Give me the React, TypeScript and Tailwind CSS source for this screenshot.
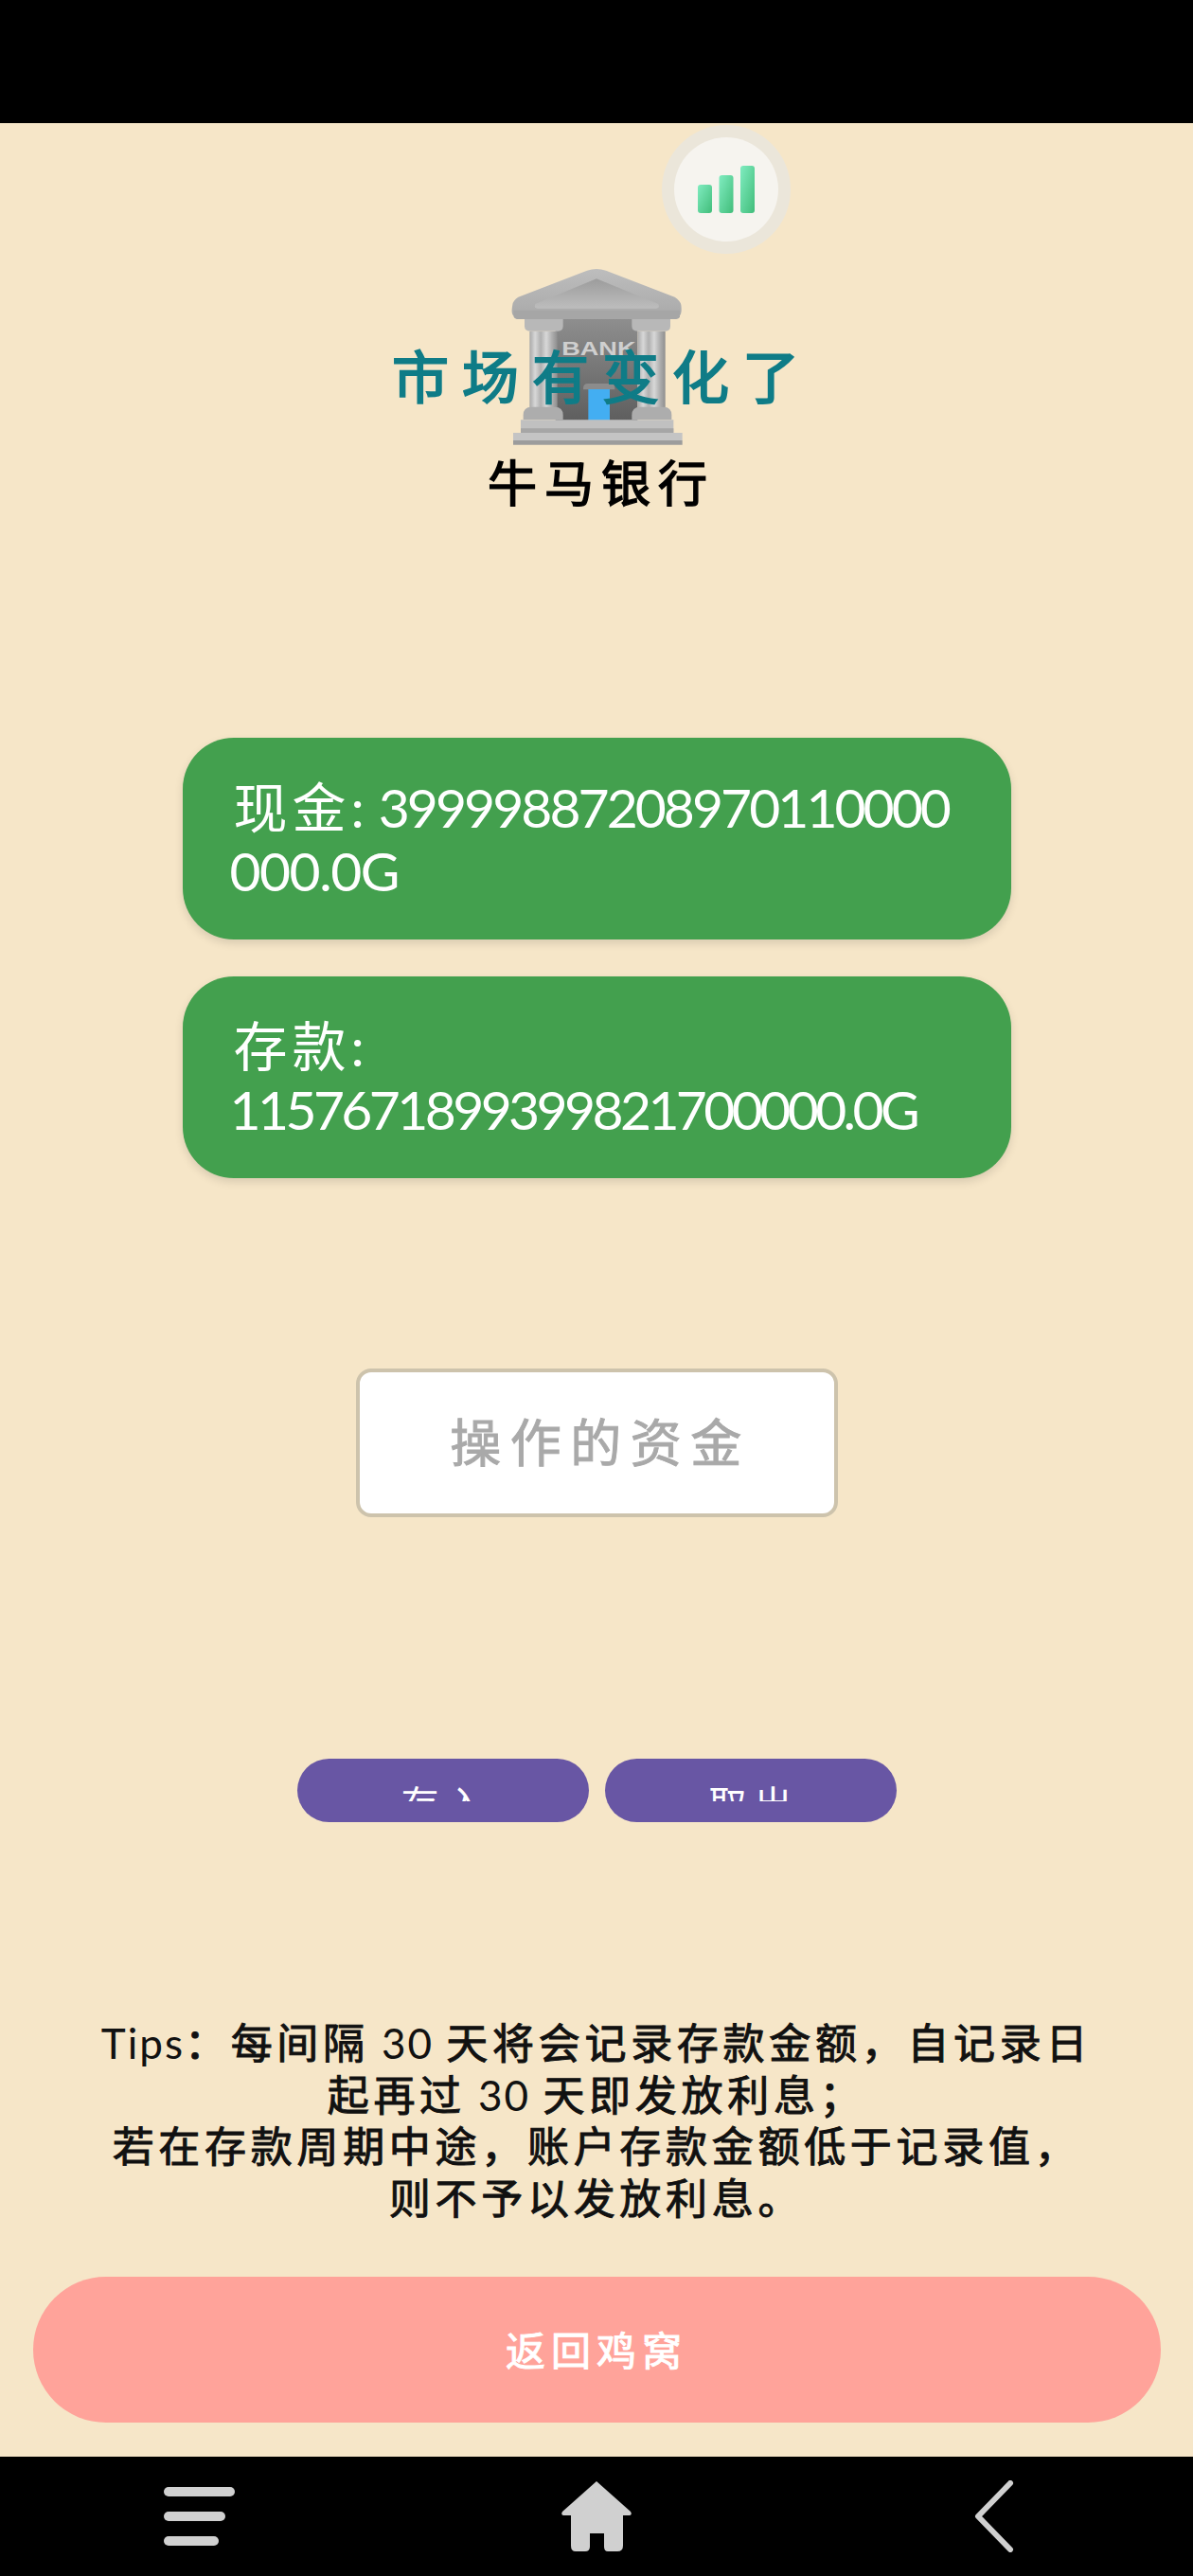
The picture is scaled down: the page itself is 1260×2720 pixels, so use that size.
const cjk = "font-['Lato','Noto_Sans_CJK_SC',sans-serif]";

function BankIcon() {
  return (
    <svg viewBox="0 0 600 600" className="w-[200px] h-[200px] block">
      <defs>
        <linearGradient id="roof" x1="0" y1="0" x2="0" y2="1">
          <stop offset="0" stopColor="#bdbdbd" />
          <stop offset="1" stopColor="#a9a9a9" />
        </linearGradient>
        <linearGradient id="tri" x1="0" y1="0" x2="0" y2="1">
          <stop offset="0" stopColor="#9c9c9c" />
          <stop offset="1" stopColor="#bdbdbd" />
        </linearGradient>
        <linearGradient id="door" x1="0" y1="0" x2="0" y2="1">
          <stop offset="0" stopColor="#8e8e8e" />
          <stop offset="1" stopColor="#5e5e5e" />
        </linearGradient>
        <linearGradient id="col" x1="0" y1="0" x2="1" y2="0">
          <stop offset="0" stopColor="#a8a8a8" />
          <stop offset="0.2" stopColor="#d8d8d8" />
          <stop offset="0.4" stopColor="#b0b0b0" />
          <stop offset="0.6" stopColor="#d8d8d8" />
          <stop offset="0.8" stopColor="#b0b0b0" />
          <stop offset="1" stopColor="#8e8e8e" />
        </linearGradient>
      </defs>
      <rect x="170" y="185" width="260" height="325" fill="url(#door)" />
      <text x="307" y="300" textAnchor="middle" fontFamily="Liberation Sans" fontWeight="700" fontSize="62" textLength="235" lengthAdjust="spacingAndGlyphs" fill="#cfcfcf">BANK</text>
      <rect x="88" y="225" width="88" height="245" fill="url(#col)" />
      <rect x="430" y="225" width="88" height="245" fill="url(#col)" />
      <path d="M72 186h122v22q0 16-16 16H90q-18 0-18-16z" fill="#b8b8b8" />
      <path d="M412 186h122v22q0 16-16 16H430q-18 0-18-16z" fill="#b8b8b8" />
      <path d="M68 490q0-26 26-26h74q26 0 26 26v14H68z" fill="#adadad" />
      <path d="M412 490q0-26 26-26h74q26 0 26 26v14H412z" fill="#adadad" />
      <path d="M258 405q0-15 15-15h70q15 0 15 15v4h-100z" fill="#8c8c8c" />
      <rect x="274" y="408" width="68" height="104" fill="#43aef2" />
      <path d="M60 505h484v40H60z" fill="#c0c0c0" />
      <path d="M60 532h484v14H60z" fill="#a6a6a6" />
      <path d="M36 546h536v24H36z" fill="#c4c4c4" />
      <path d="M36 570h536v14H36z" fill="#9c9c9c" />
      <path d="M38 176q-10-6-4-36 2-14 18-24L270 32q30-10 60 0l218 84q16 10 20 24 4 30-6 36q-6 10-16 10H54q-10 0-16-10z" fill="url(#roof)" />
      <path d="M106 138 300 58l196 80q6 14-8 14H114q-14 0-8-14z" fill="url(#tri)" />
      <path d="M38 158h526v20q-2 8-14 8H52q-12 0-14-8z" fill="#a6a6a6" />
    </svg>
  );
}

function Bars() {
  return (
    <svg viewBox="0 0 60 50" className="w-[60px] h-[50px] block">
      <defs>
        <linearGradient id="bar" x1="0" y1="0" x2="1" y2="1">
          <stop offset="0" stopColor="#80ecc0" />
          <stop offset="1" stopColor="#41bd7a" />
        </linearGradient>
      </defs>
      <rect x="0" y="20" width="15" height="30" rx="3" fill="url(#bar)" />
      <rect x="22.5" y="10" width="15" height="40" rx="3" fill="url(#bar)" />
      <rect x="45" y="0" width="15" height="50" rx="3" fill="url(#bar)" />
    </svg>
  );
}

function Card({ className, children }: { className: string; children: React.ReactNode }) {
  return (
    <div className={`w-[875px] h-[213px] mx-auto rounded-[54px] bg-[#43a04e] shadow-[0_4px_10px_rgba(0,0,0,0.12)] pl-[50px] py-[40px] text-white text-[57px] leading-[67px] whitespace-nowrap ${className}`}>
      {children}
    </div>
  );
}

function ActionButton({ label }: { label: string }) {
  return (
    <div className="w-[308px] h-[67px] rounded-[34px] bg-[#6856a4] flex justify-center pt-[26px]">
      <div className="h-[19px] overflow-hidden text-white text-[40px] leading-[40px] tracking-[8px] pl-[8px] font-['Noto_Sans_CJK_SC',sans-serif]">{label}</div>
    </div>
  );
}

export default function App() {
  const stroke = "[-webkit-text-stroke:1px_currentColor]";
  const latin = "[-webkit-text-stroke:0px_currentColor]";
  return (
    <div className={`w-[1260px] h-[2720px] flex flex-col bg-black ${cjk}`}>
      <div className="h-[130px] shrink-0 bg-black" />
      <main className="relative h-[2464px] shrink-0 bg-[#f6e6c8] pt-[153px] overflow-hidden">
        <div className="absolute left-[699px] top-[2px] w-[136px] h-[136px] rounded-full bg-[#ebe6da] flex items-center justify-center">
          <div className="w-[110px] h-[110px] rounded-full bg-[#f6f4ef] flex items-center justify-center">
            <Bars />
          </div>
        </div>

        <div className="relative w-[200px] h-[187px] mx-auto overflow-hidden">
          <div className="-translate-y-[8px]">
            <BankIcon />
          </div>
        </div>
        <h2 className="absolute left-0 right-0 top-[227px] pl-[12px] text-center text-[#0f7c87] text-[60px] leading-[76px] tracking-[14px] font-normal [-webkit-text-stroke:2px_currentColor] font-['Noto_Sans_CJK_SC',sans-serif]">市场有变化了</h2>
        <h1 className="mt-[3px] pl-[10px] text-center text-black text-[52px] leading-[70px] tracking-[8px] font-normal [-webkit-text-stroke:1.5px_currentColor] font-['Noto_Sans_CJK_SC',sans-serif]">牛马银行</h1>

        <Card className="mt-[236px]">
          <span className="tracking-[5px] pl-[4px]">现金:</span>
          <span className="tracking-[-2.95px] pl-[10px]">39999887208970110000</span>
          <br />
          <span className="tracking-[-1.5px]">000.0G</span>
        </Card>
        <Card className="mt-[39px]">
          <span className="tracking-[5px] pl-[4px]">存款:</span>
          <br />
          <span className="tracking-[-3.6px]">1157671899399821700000.0G</span>
        </Card>

        <div className="mt-[201px] mx-auto w-[509px] h-[157px] rounded-[16px] bg-white border-[4px] border-[#cdc3ac] flex items-center justify-center pb-[6px] pl-[8px] text-[#a9a9a9] text-[54px] tracking-[9.5px] [-webkit-text-stroke:1px_currentColor] font-['Noto_Sans_CJK_SC',sans-serif]">
          操作的资金
        </div>

        <div className="mt-[255px] flex justify-center gap-[17px]">
          <ActionButton label="存入" />
          <ActionButton label="取出" />
        </div>

        <p className={`mt-[206px] text-center text-[#111] text-[44px] leading-[54.5px] tracking-[4.7px] ${stroke} font-['Lato','Noto_Sans_CJK_SC',sans-serif]`}>
          <span className={`tracking-[2px] ${latin}`}>Tips</span>：每间隔<span className={`tracking-[2px] ${latin}`}> 30 </span>天将会记录存款金额，自记录日
          <br />
          起再过<span className={`tracking-[2px] ${latin}`}> 30 </span>天即发放利息；
          <br />
          若在存款周期中途，账户存款金额低于记录值，
          <br />
          则不予以发放利息。
        </p>

        <div className={`mt-[56px] mx-auto w-[1191px] h-[154px] rounded-[77px] bg-[#ffa39a] flex items-center justify-center pb-[4px] text-white text-[42px] tracking-[6px] ${stroke} font-['Noto_Sans_CJK_SC',sans-serif]`}>
          返回鸡窝
        </div>
      </main>
      <nav className="h-[126px] shrink-0 bg-black grid grid-cols-3 items-center">
        <div className="pl-[173px] flex flex-col gap-[16px]">
          <div className="w-[75px] h-[10px] rounded-full bg-[#d0d0d0]" />
          <div className="w-[65px] h-[10px] rounded-full bg-[#d0d0d0]" />
          <div className="w-[58px] h-[10px] rounded-full bg-[#d0d0d0]" />
        </div>
        <div className="flex justify-center">
          <svg viewBox="0 0 76 76" className="w-[76px] h-[76px] block">
            <path d="M38 1 L74 33 Q76 36 73 37 L66 37 L66 69 Q66 75 60 75 L50 75 Q46 75 46 70 L46 56 L31 56 L31 70 Q31 75 26 75 L16 75 Q11 75 11 69 L11 37 L3 37 Q0 36 2 33 Z" fill="#d0d0d0" />
          </svg>
        </div>
        <div className="flex justify-end pr-[189px]">
          <svg viewBox="0 0 42 76" className="w-[42px] h-[76px] block">
            <path d="M38 3 L4 38 L38 73" fill="none" stroke="#d0d0d0" strokeWidth="6" strokeLinecap="round" strokeLinejoin="round" />
          </svg>
        </div>
      </nav>
    </div>
  );
}
